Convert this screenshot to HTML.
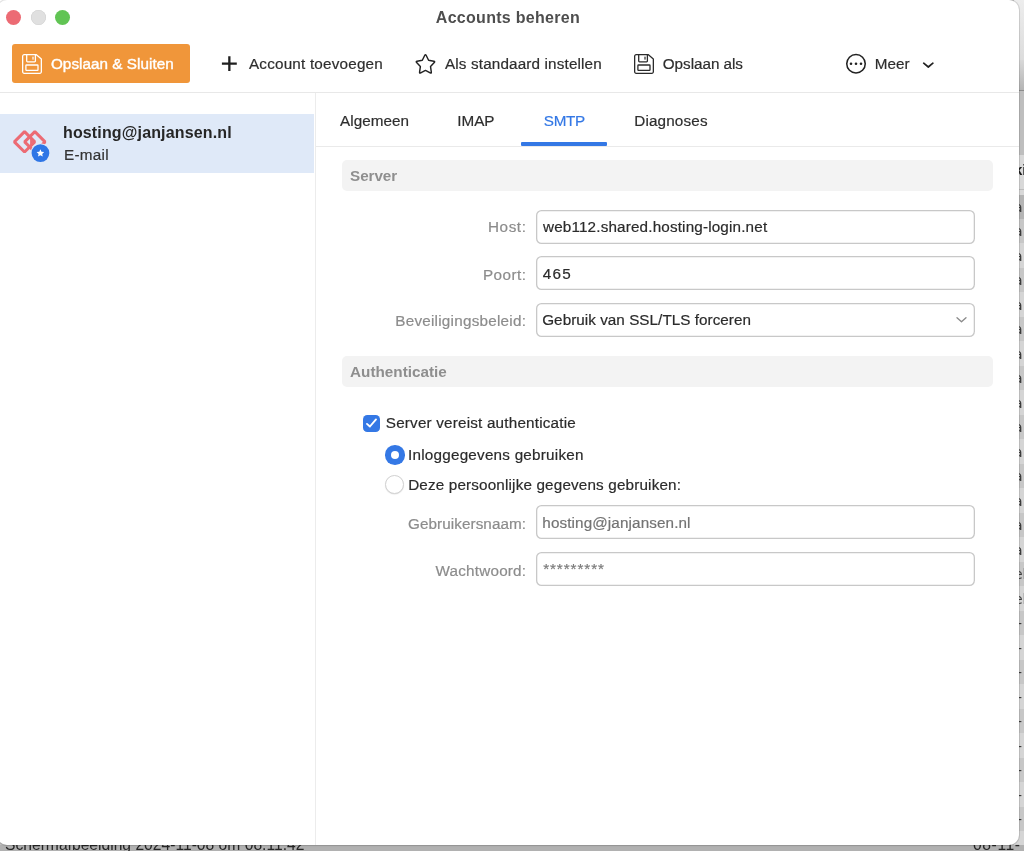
<!DOCTYPE html>
<html lang="nl">
<head>
<meta charset="utf-8">
<title>Accounts beheren</title>
<style>
*{box-sizing:border-box;margin:0;padding:0}
html,body{width:1024px;height:851px;overflow:hidden}
body{position:relative;background:#c4c4c4;font-family:"Liberation Sans",sans-serif;font-size:15px;color:#2b2b2b}
.abs{position:absolute}
.t{position:absolute;white-space:nowrap;line-height:20px;height:20px;-webkit-text-stroke:.2px}
svg{position:absolute;overflow:visible}
/* desktop visible behind the window */
#strip{left:1014px;top:0;width:10px;height:851px;background:#dadada}
#strip i{position:absolute;left:0;width:10px;display:block}
#bottom{left:0;top:845px;width:1024px;height:6px;background:#b1b1b1}
.bt{position:absolute;white-space:nowrap;font-size:15.65px;line-height:18px;color:#262626;will-change:transform}
.st{position:absolute;white-space:nowrap;font-family:"DejaVu Sans","Liberation Sans",sans-serif;font-size:14px;line-height:20px;color:#3c3c3c;will-change:transform}
/* window */
#win{will-change:transform;left:-3px;top:0;width:1022px;height:845px;background:#fff;border-radius:10px;overflow:hidden;box-shadow:0 0 0 1px rgba(0,0,0,.11),0 1px 2px rgba(0,0,0,.08)}
#hdrline{left:0;top:92px;width:1019px;height:1px;background:#e8e8e8}
#vline{left:315.3px;top:93px;width:1px;height:752px;background:#ececec}
#tabline{left:316px;top:146px;width:703px;height:1px;background:#eaeaea}
.dot{position:absolute;top:9.7px;width:15px;height:15px;border-radius:50%}
#btn{left:12px;top:44px;width:178px;height:39.3px;background:#f0963a;border-radius:3px}
#sel{left:0;top:114.3px;width:314.2px;height:58.7px;background:#dfe9f8}
.sec{position:absolute;left:342px;width:651px;height:31px;background:#f3f3f3;border-radius:5px}
.inp{position:absolute;left:535.8px;width:439px;height:34px;box-shadow:inset 0 0 0 1.3px #c8c8c8;border-radius:5.5px;background:#fff}
</style>
</head>
<body>
<div id="strip" class="abs"><i style="top:0;height:60px;background:linear-gradient(#ededed,#dcdcdc)"></i><i style="top:60px;height:30px;background:linear-gradient(#d8d8d8,#b4b4b4)"></i><i style="top:90px;height:1px;background:#8c8c8c"></i><i style="top:91px;height:64px;background:#bebebe"></i><i style="top:155px;height:33.5px;background:#d8d8d8"></i><i style="top:188.5px;height:1px;background:#bcbcbc"></i><i style="top:189.5px;height:5.5px;background:#d8d8d8"></i><i style="top:195px;height:24px;background:#b4b4b4"></i><i style="top:219px;height:632px;background:repeating-linear-gradient(#c7c7c7 0,#c7c7c7 24.5px,#d5d5d5 24.5px,#d5d5d5 49px)"></i></div>
<span class="st" style="left:1014.3px;top:196.9px">a</span><span class="st" style="left:1014.3px;top:221.4px">a</span><span class="st" style="left:1014.3px;top:245.9px">a</span><span class="st" style="left:1014.3px;top:270.4px">a</span><span class="st" style="left:1014.3px;top:294.9px">a</span><span class="st" style="left:1014.3px;top:319.4px">a</span><span class="st" style="left:1014.3px;top:343.9px">a</span><span class="st" style="left:1014.3px;top:368.4px">a</span><span class="st" style="left:1014.3px;top:392.9px">a</span><span class="st" style="left:1014.3px;top:417.4px">a</span><span class="st" style="left:1014.3px;top:441.9px">a</span><span class="st" style="left:1014.3px;top:466.4px">a</span><span class="st" style="left:1014.3px;top:490.9px">a</span><span class="st" style="left:1014.3px;top:515.4px">a</span><span class="st" style="left:1014.3px;top:539.9px">a</span><span class="st" style="left:1014.0px;top:564.4px">el</span><span class="st" style="left:1014.0px;top:588.9px">el</span><span class="st" style="left:1017.2px;top:613.4px">-</span><span class="st" style="left:1017.2px;top:637.9px">-</span><span class="st" style="left:1017.2px;top:662.4px">-</span><span class="st" style="left:1017.2px;top:686.9px">-</span><span class="st" style="left:1017.2px;top:711.4px">-</span><span class="st" style="left:1017.2px;top:735.9px">-</span><span class="st" style="left:1017.2px;top:760.4px">-</span><span class="st" style="left:1017.2px;top:784.9px">-</span><span class="st" style="left:1017.2px;top:809.4px">-</span>
<span class="st" style="left:1013.6px;top:159.5px;font-family:'Liberation Sans',sans-serif;font-size:15px;font-weight:bold;color:#1c1c1c">ki</span>
<div id="bottom" class="abs"></div>
<span class="bt" style="left:5.2px;top:835.6px">Schermafbeelding 2024-11-08 om 08.11.42</span>
<span class="bt" style="left:973px;top:835.6px;letter-spacing:.6px">08-11-</span>
<div class="abs" style="left:0;top:0;width:14px;height:14px;background:#fff"></div>
<div id="win" class="abs">
 <div class="abs" style="left:3px;top:0;width:1019px;height:845px">
  <div class="dot" style="left:6px;background:#ec6b74"></div>
  <div class="dot" style="left:30.6px;background:#e0e0e0;box-shadow:inset 0 0 0 .6px #d2d2d2"></div>
  <div class="dot" style="left:55px;background:#61c454"></div>

  <div id="btn" class="abs"></div>
  <!-- save icon (white) -->
  <svg style="left:22px;top:53.6px" width="20" height="20" viewBox="0 0 20 20" fill="none" stroke="#fff" stroke-width="1.3" stroke-linejoin="round" stroke-linecap="round">
    <path d="M2.2 .65H14.4L19.35 4.9V17.8a1.55 1.55 0 0 1-1.55 1.55H2.2A1.55 1.55 0 0 1 .65 17.8V2.2A1.55 1.55 0 0 1 2.2 .65Z"/>
    <path d="M4.7 .8V7a.8 .8 0 0 0 .8 .8h7.1a.8 .8 0 0 0 .8-.8V.8"/>
    <rect x="3.9" y="11" width="12.1" height="5.3" rx=".6"/>
    <rect x="10.4" y="2.5" width="1.2" height="3.2" rx=".4" fill="#fff" stroke="none"/>
  </svg>
  <!-- plus -->
  <svg style="left:221px;top:55px" width="17" height="17" viewBox="0 0 17 17" fill="none" stroke="#1f1f1f" stroke-width="2.3" stroke-linecap="butt">
    <path d="M.9 8.55H15.8M8.35 1.15V15.95"/>
  </svg>
  <!-- star -->
  <svg style="left:406px;top:46px" width="40" height="36" viewBox="406 46 40 36" fill="none" stroke="#222" stroke-width="1.45" stroke-linejoin="round">
    <path d="M424.78 55.28Q425.45 53.93 426.12 55.28L428.59 60.26L433.82 61.18Q435.29 61.44 434.27 62.54L430.54 66.54L431.32 72.11Q431.53 73.59 430.20 72.90L425.45 70.42L420.70 72.90Q419.37 73.59 419.58 72.11L420.36 66.54L416.63 62.54Q415.61 61.44 417.08 61.18L422.31 60.26Z"/>
  </svg>
  <!-- save icon (dark) -->
  <svg style="left:634px;top:53.8px" width="20" height="20" viewBox="0 0 20 20" fill="none" stroke="#2b2b2b" stroke-width="1.3" stroke-linejoin="round" stroke-linecap="round">
    <path d="M2.2 .65H14.4L19.35 4.9V17.8a1.55 1.55 0 0 1-1.55 1.55H2.2A1.55 1.55 0 0 1 .65 17.8V2.2A1.55 1.55 0 0 1 2.2 .65Z"/>
    <path d="M4.7 .8V7a.8 .8 0 0 0 .8 .8h7.1a.8 .8 0 0 0 .8-.8V.8"/>
    <rect x="3.9" y="11" width="12.1" height="5.3" rx=".6"/>
    <rect x="10.4" y="2.5" width="1.2" height="3.2" rx=".4" fill="#2b2b2b" stroke="none"/>
  </svg>
  <!-- more -->
  <svg style="left:845px;top:53px" width="22" height="22" viewBox="845 53 22 22" fill="none" stroke="#222" stroke-width="1.55">
    <circle cx="856" cy="63.75" r="9.25"/>
    <circle cx="851" cy="63.75" r="1.3" fill="#222" stroke="none"/>
    <circle cx="856" cy="63.75" r="1.3" fill="#222" stroke="none"/>
    <circle cx="861" cy="63.75" r="1.3" fill="#222" stroke="none"/>
  </svg>
  <svg style="left:920px;top:58px" width="16" height="12" viewBox="920 58 16 12" fill="none" stroke="#222" stroke-width="1.7" stroke-linecap="round" stroke-linejoin="round">
    <path d="M923.7 63.2L928.3 67L932.9 63.2"/>
  </svg>
  <div id="hdrline" class="abs"></div>

  <div id="sel" class="abs"></div>
  <!-- account icon -->
  <svg style="left:8px;top:124px" width="48" height="44" viewBox="8 124 48 44" fill="none">
    <g stroke="#ec6b74" stroke-width="3" stroke-linejoin="bevel">
      <path d="M24.55 131.65L34.75 141.85L24.55 152.05L14.35 141.85Z"/>
      <path d="M34.85 131.65L45.05 141.85L34.85 152.05L24.65 141.85Z"/>
    </g>
    <path d="M30.1 138.5L33.2 141.85L30.1 145.2Z" fill="#ec6b74"/>
    <circle cx="40.45" cy="153.1" r="9.9" fill="#dfe9f8"/>
    <circle cx="40.45" cy="153.1" r="8.9" fill="#2f76e6"/>
    <path d="M40.4 149.3L41.5 151.8L44.2 152.1L42.2 153.9L42.8 156.6L40.4 155.2L38 156.6L38.6 153.9L36.6 152.1L39.3 151.8Z" fill="#fff"/>
  </svg>
  <div id="vline" class="abs"></div>

  <div id="tabline" class="abs"></div>
  <div class="abs" style="left:521.2px;top:142.2px;width:85.8px;height:4px;background:#3478e5;border-radius:1px"></div>

  <div class="sec" style="top:159.5px"></div>
  <div class="inp" style="top:209.7px"></div>
  <div class="inp" style="top:256.4px"></div>
  <div class="inp" style="top:303px"></div>
  <svg style="left:954px;top:314px" width="16" height="12" viewBox="954 314 16 12" fill="none" stroke="#8a8a8a" stroke-width="1.3" stroke-linecap="round" stroke-linejoin="round">
    <path d="M957 317.7L961.5 321.8L966 317.7"/>
  </svg>

  <div class="sec" style="top:355.5px"></div>
  <!-- checkbox -->
  <div class="abs" style="left:363px;top:414.5px;width:17px;height:17px;border-radius:4.3px;background:#3478e5"></div>
  <svg style="left:363px;top:414.5px" width="17" height="17" viewBox="363 414.5 17 17" fill="none" stroke="#fff" stroke-width="1.9" stroke-linecap="round" stroke-linejoin="round">
    <path d="M367 423.4L369.9 426L376 418.9"/>
  </svg>
  <!-- radios -->
  <div class="abs" style="left:385px;top:445.1px;width:19.6px;height:19.6px;border-radius:50%;background:#3478e5"></div>
  <div class="abs" style="left:390.7px;top:450.8px;width:8.2px;height:8.2px;border-radius:50%;background:#fff"></div>
  <div class="abs" style="left:385.1px;top:474.8px;width:19.2px;height:19.2px;border-radius:50%;background:#fff;border:1px solid #d2d2d2;box-shadow:0 .5px 1px rgba(0,0,0,.12)"></div>
  <div class="inp" style="top:505px"></div>
  <div class="inp" style="top:551.9px"></div>

  <span class="t" style="left:435.80px;top:8px;font-size:16px;font-weight:bold;-webkit-text-stroke:0;color:#4e4e4e;letter-spacing:0.29px;">Accounts beheren</span>
  <span class="t" style="left:50.98px;top:54px;font-size:15.25px;color:#ffffff;letter-spacing:0.04px;-webkit-text-stroke:.4px #fff">Opslaan &amp; Sluiten</span>
  <span class="t" style="left:248.97px;top:54px;font-size:15.25px;color:#2e2e2e;letter-spacing:0.2px;">Account toevoegen</span>
  <span class="t" style="left:444.97px;top:54px;font-size:15.25px;color:#2e2e2e;letter-spacing:0.15px;">Als standaard instellen</span>
  <span class="t" style="left:662.78px;top:54px;font-size:15.25px;color:#2e2e2e;letter-spacing:-0.03px;">Opslaan als</span>
  <span class="t" style="left:874.75px;top:54px;font-size:15.25px;color:#2e2e2e;letter-spacing:0.05px;">Meer</span>
  <span class="t" style="left:62.98px;top:123px;font-size:16px;font-weight:bold;-webkit-text-stroke:0;color:#262626;letter-spacing:0.15px;">hosting@janjansen.nl</span>
  <span class="t" style="left:63.95px;top:145px;font-size:15.25px;color:#333333;letter-spacing:0.29px;">E-mail</span>
  <span class="t" style="left:339.97px;top:111px;font-size:15.25px;color:#2e2e2e;letter-spacing:0.05px;">Algemeen</span>
  <span class="t" style="left:457.34px;top:111px;font-size:15.25px;color:#2e2e2e;letter-spacing:-0.03px;">IMAP</span>
  <span class="t" style="left:543.81px;top:111px;font-size:15.25px;color:#3478e5;letter-spacing:-0.29px;">SMTP</span>
  <span class="t" style="left:634.25px;top:111px;font-size:15.25px;color:#2e2e2e;letter-spacing:0.15px;">Diagnoses</span>
  <span class="t" style="left:350.06px;top:166px;font-size:15.25px;font-weight:bold;-webkit-text-stroke:0;color:#8e8e8e;letter-spacing:-0.07px;">Server</span>
  <span class="t" style="left:488.00px;top:217px;font-size:15.25px;color:#8c8c8c;letter-spacing:0.57px;">Host:</span>
  <span class="t" style="left:543.02px;top:217px;font-size:15.25px;color:#2b2b2b;letter-spacing:0.16px;">web112.shared.hosting-login.net</span>
  <span class="t" style="left:483.00px;top:265px;font-size:15.25px;color:#8c8c8c;letter-spacing:0.44px;">Poort:</span>
  <span class="t" style="left:542.65px;top:264px;font-size:15.25px;color:#2b2b2b;letter-spacing:1.27px;">465</span>
  <span class="t" style="left:395.25px;top:311px;font-size:15.25px;color:#8c8c8c;letter-spacing:0.24px;">Beveiligingsbeleid:</span>
  <span class="t" style="left:542.23px;top:310px;font-size:15.25px;color:#2b2b2b;letter-spacing:0.04px;">Gebruik van SSL/TLS forceren</span>
  <span class="t" style="left:350.12px;top:362px;font-size:15.25px;font-weight:bold;-webkit-text-stroke:0;color:#8e8e8e;letter-spacing:0.0px;">Authenticatie</span>
  <span class="t" style="left:385.81px;top:413px;font-size:15.25px;color:#2b2b2b;letter-spacing:0.19px;">Server vereist authenticatie</span>
  <span class="t" style="left:407.99px;top:445px;font-size:15.25px;color:#2b2b2b;letter-spacing:0.23px;">Inloggegevens gebruiken</span>
  <span class="t" style="left:408.15px;top:475px;font-size:15.25px;color:#2b2b2b;letter-spacing:0.16px;">Deze persoonlijke gegevens gebruiken:</span>
  <span class="t" style="left:407.98px;top:514px;font-size:15.25px;color:#8c8c8c;letter-spacing:0.08px;">Gebruikersnaam:</span>
  <span class="t" style="left:542.34px;top:513px;font-size:15.25px;color:#737373;letter-spacing:0.11px;">hosting@janjansen.nl</span>
  <span class="t" style="left:435.53px;top:561px;font-size:15.25px;color:#8c8c8c;letter-spacing:0.21px;">Wachtwoord:</span>
  <span class="t" style="left:543.15px;top:559px;font-size:15.25px;color:#7a7a7a;letter-spacing:0.93px;">*********</span>
 </div>
</div>
</body>
</html>
